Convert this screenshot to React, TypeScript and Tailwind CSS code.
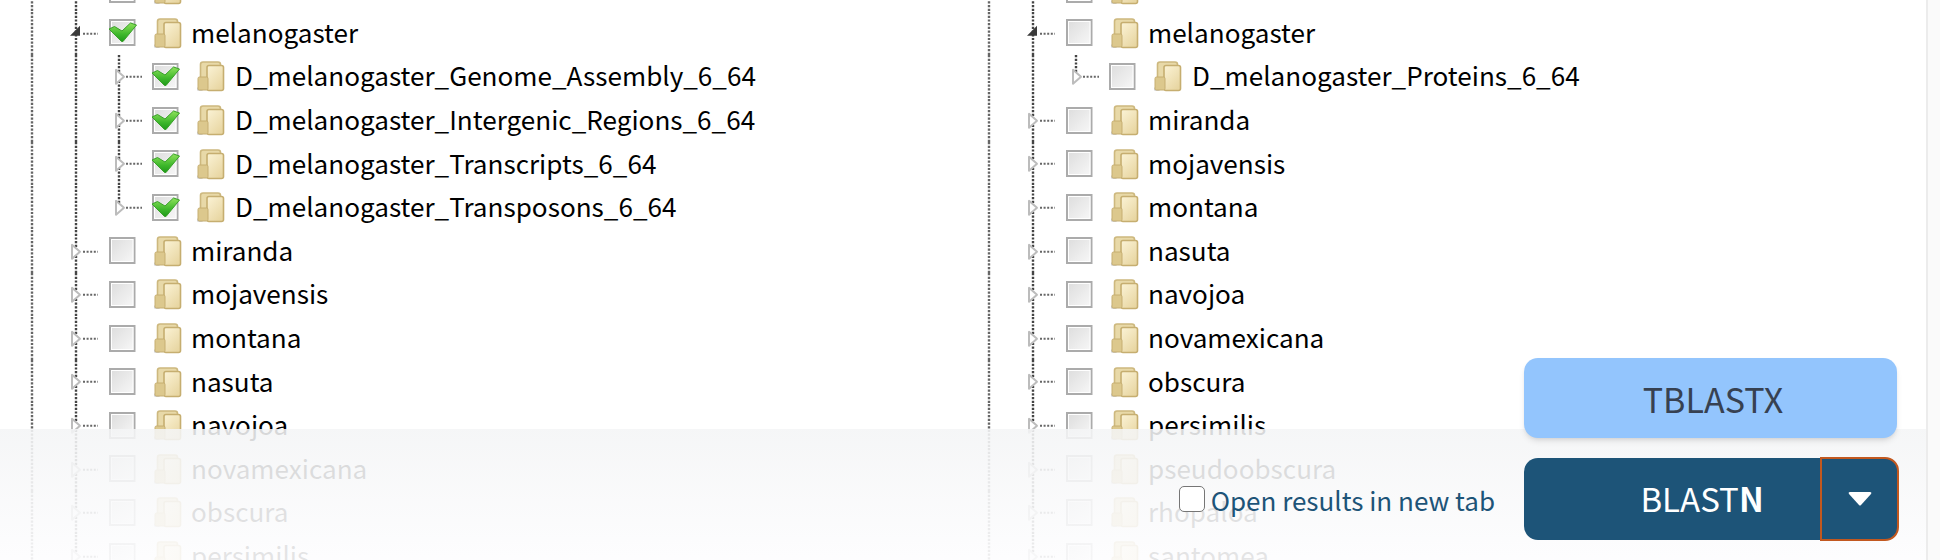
import React from 'react';

const ROW_H = 43.6;

interface Node {
  name: string;
  checked?: boolean;
  open?: boolean;
  children?: Node[];
}

const LEFT_TREE: Node[] = [
  { name: 'kikkawai' },
  {
    name: 'melanogaster',
    checked: true,
    open: true,
    children: [
      { name: 'D_melanogaster_Genome_Assembly_6_64', checked: true },
      { name: 'D_melanogaster_Intergenic_Regions_6_64', checked: true },
      { name: 'D_melanogaster_Transcripts_6_64', checked: true },
      { name: 'D_melanogaster_Transposons_6_64', checked: true },
    ],
  },
  { name: 'miranda' },
  { name: 'mojavensis' },
  { name: 'montana' },
  { name: 'nasuta' },
  { name: 'navojoa' },
  { name: 'novamexicana' },
  { name: 'obscura' },
  { name: 'persimilis' },
];

const RIGHT_TREE: Node[] = [
  { name: 'kikkawai' },
  {
    name: 'melanogaster',
    open: true,
    children: [{ name: 'D_melanogaster_Proteins_6_64' }],
  },
  { name: 'miranda' },
  { name: 'mojavensis' },
  { name: 'montana' },
  { name: 'nasuta' },
  { name: 'navojoa' },
  { name: 'novamexicana' },
  { name: 'obscura' },
  { name: 'persimilis' },
  { name: 'pseudoobscura' },
  { name: 'rhopaloa' },
  { name: 'santomea' },
];

function Dots({ x, y1, y2, dark }: { x: number; y1: number; y2: number; dark?: boolean }) {
  return <line x1={x} x2={x} y1={y1} y2={y2} stroke={dark ? '#444444' : '#666666'} strokeWidth={2.4} strokeDasharray="2.2 1.5" />;
}

function Arrow({ x, mid }: { x: number; mid: number }) {
  return <polygon points={`${x},${mid - 7} ${x},${mid + 7} ${x + 8},${mid}`} fill="#fff" stroke="#bcbcbc" strokeWidth={2} strokeLinejoin="round" />;
}

// dotted guides and the expander arrow of one top level row
function Guides({ open }: { open?: boolean }) {
  const mid = ROW_H / 2;
  return (
    <svg width={100} height={ROW_H} className="shrink-0">
      <Dots x={32} y1={0} y2={ROW_H} />
      <Dots x={76} y1={0} y2={ROW_H} dark />
      <line x1={83} x2={98} y1={mid} y2={mid} stroke="#666666" strokeWidth={2} strokeDasharray="2 1.6" />
      {open ? <polygon points={`70,${mid + 2} 80,${mid - 8} 80,${mid + 2}`} fill="#3a3a3a" /> : <Arrow x={72} mid={mid} />}
    </svg>
  );
}

function ChildGuides({ last }: { last?: boolean }) {
  const mid = ROW_H / 2;
  return (
    <svg width={143} height={ROW_H} className="shrink-0">
      <Dots x={32} y1={0} y2={ROW_H} />
      <Dots x={76} y1={0} y2={ROW_H} dark />
      <Dots x={119} y1={0} y2={last ? mid : ROW_H} dark />
      <line x1={126} x2={142} y1={mid} y2={mid} stroke="#666666" strokeWidth={2} strokeDasharray="2 1.6" />
      <Arrow x={116} mid={mid} />
    </svg>
  );
}

function CheckIcon({ checked }: { checked?: boolean }) {
  return (
    <svg width={30} height={28} viewBox="0 0 30 28" className="shrink-0">
      <defs>
        <linearGradient id="box" x1="0" y1="0" x2="1" y2="1">
          <stop offset="0" stopColor="#dcdcdc" />
          <stop offset="1" stopColor="#f8f8f8" />
        </linearGradient>
        <linearGradient id="tick" x1="0" y1="0" x2="0" y2="1">
          <stop offset="0" stopColor="#8fe25c" />
          <stop offset="0.6" stopColor="#3fb82c" />
          <stop offset="1" stopColor="#1f9a1a" />
        </linearGradient>
      </defs>
      <rect x={2} y={1} width={24.5} height={25} fill="url(#box)" stroke="#ababab" strokeWidth={2} />
      <rect x={3.5} y={2.5} width={21.5} height={22} fill="none" stroke="#ffffff" strokeWidth={1} />
      {checked && (
        <path d="M1 10 L6.5 7.5 L14 12 L22.5 4 L28.5 6 L15 22.5 L13.5 22.5 Z" fill="url(#tick)" stroke="#3aa02a" strokeWidth={1} strokeLinejoin="round" />
      )}
    </svg>
  );
}

function FolderIcon() {
  return (
    <svg width={28} height={31} viewBox="0 0 28 31" className="shrink-0">
      <defs>
        <linearGradient id="leaf" x1="0" y1="0" x2="0.7" y2="1">
          <stop offset="0" stopColor="#fbf3d6" />
          <stop offset="1" stopColor="#e8d6a2" />
        </linearGradient>
      </defs>
      <ellipse cx={3} cy={28} rx={3.5} ry={2} fill="#cfcfcf" />
      <rect x={3.5} y={1} width={20} height={24} rx={2.5} fill="#e8d9a8" stroke="#cdb87e" strokeWidth={1.6} />
      <rect x={10} y={4.5} width={16.5} height={25} rx={2} fill="url(#leaf)" stroke="#c6ae70" strokeWidth={1.6} />
      <rect x={1} y={16} width={10} height={13} rx={1.5} fill="#dcc88d" stroke="#c6ae70" strokeWidth={1} />
    </svg>
  );
}

function TreeRow({ node }: { node: Node }) {
  return (
    <>
      <div className="flex items-center" style={{ height: ROW_H }}>
        <Guides open={node.open} />
        <div className="ml-[8px] flex items-center">
          <CheckIcon checked={node.checked} />
        </div>
        <div className="ml-[16px] flex items-center">
          <FolderIcon />
        </div>
        <span className="ml-[9px] whitespace-nowrap pb-[3px] text-[26.1px] leading-none text-black">{node.name}</span>
      </div>
      {node.children?.map((child, i) => (
        <div key={child.name} className="flex items-center" style={{ height: ROW_H }}>
          <ChildGuides last={i === node.children!.length - 1} />
          <div className="ml-[8px] flex items-center">
            <CheckIcon checked={child.checked} />
          </div>
          <div className="ml-[16px] flex items-center">
            <FolderIcon />
          </div>
          <span className="ml-[10px] whitespace-nowrap pb-[3px] text-[26.1px] leading-none text-black">{child.name}</span>
        </div>
      ))}
    </>
  );
}

function Tree({ nodes }: { nodes: Node[] }) {
  return (
    <div className="w-[957px] shrink-0">
      {nodes.map((node) => (
        <TreeRow key={node.name} node={node} />
      ))}
    </div>
  );
}

export default function App() {
  return (
    <div className="relative flex h-[560px] w-full overflow-hidden bg-white font-['Noto_Sans_CJK_SC','Source_Sans_Pro',sans-serif]">
      <div className="relative h-full w-[1926px] shrink-0 overflow-hidden">
        <div className="-mt-[32px] flex">
          <Tree nodes={LEFT_TREE} />
          <Tree nodes={RIGHT_TREE} />
        </div>

        {/* fading footer over the trees */}
        <div className="absolute inset-x-0 bottom-0 h-[131px] bg-gradient-to-b from-[rgba(244,245,246,0.88)] to-[rgba(253,253,254,0.9)]" />

        <div className="absolute bottom-[19px] right-[27px] flex flex-col items-end gap-[19px]">
          <button
            type="button"
            className="mr-[2px] h-[80px] w-[373px] rounded-[14px] bg-[#93c5fd] pl-[5px] text-[34px] text-[#374151] shadow-md"
          >
            TBLASTX
          </button>
          <div className="flex items-center gap-[29px]">
            <label className="flex items-center gap-[6px] text-[26px] text-[#1d5478]">
              <input type="checkbox" className="h-[26px] w-[26px] appearance-none rounded-[5px] border border-[#767676] bg-white" />
              Open results in new tab
            </label>
            <div className="flex h-[84px] w-[375px] rounded-[14px]">
              <button
                type="button"
                className="my-[1px] w-[296px] rounded-l-[14px] bg-[#1d5478] pl-[60px] text-[33px] text-white"
              >
                BLAST<span className="font-bold">N</span>
              </button>
              <button
                type="button"
                className="flex w-[79px] items-center justify-center rounded-r-[14px] border-2 border-[#c2581f] bg-[#1d5478]"
              >
                <svg width={24} height={14} viewBox="0 0 24 14">
                  <path d="M2 0 H22 Q24 0 23 2 L13 13 Q12 14 11 13 L1 2 Q0 0 2 0 Z" fill="#fff" />
                </svg>
              </button>
            </div>
          </div>
        </div>
      </div>
      {/* scrollbar track */}
      <div className="h-full flex-1 border-l-2 border-[#ececec] bg-[#fafafa]" />
    </div>
  );
}
